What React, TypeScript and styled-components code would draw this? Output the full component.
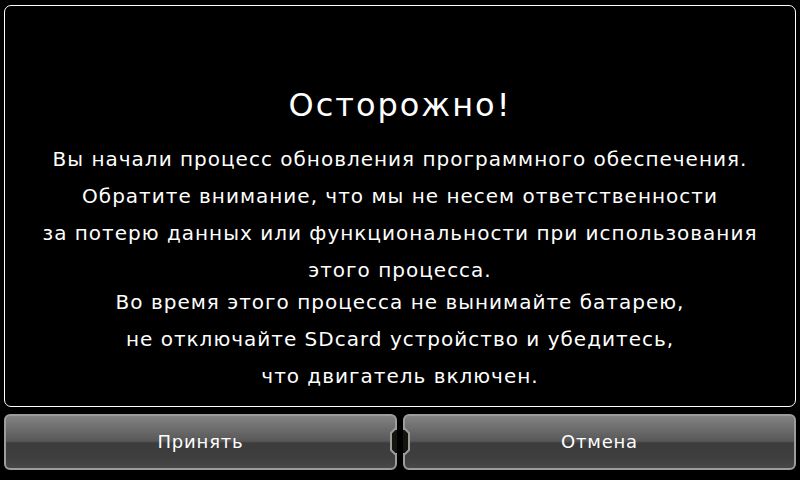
import React from 'react'
import styled, { createGlobalStyle } from 'styled-components'

const Global = createGlobalStyle`
  html, body {
    margin: 0;
    padding: 0;
    background: #000;
    width: 800px;
    height: 480px;
    overflow: hidden;
  }
  body {
    font-family: "DejaVu Sans", "Liberation Sans", sans-serif;
    color: #fff;
  }
`

const Screen = styled.div`
  width: 800px;
  height: 480px;
  box-sizing: border-box;
  padding: 5px 4px 0 4px;
  display: flex;
  flex-direction: column;
`

const Panel = styled.div`
  height: 402px;
  box-sizing: border-box;
  border: 1px solid #fff;
  border-radius: 7px;
  display: flex;
  flex-direction: column;
  align-items: center;
  padding-top: 79px;
`

const Title = styled.h1`
  margin: 0 0 16px 0;
  font-size: 32px;
  font-weight: normal;
  line-height: 40px;
  letter-spacing: 2px;
`

const Paragraph = styled.p<{ $shift?: number }>`
  margin: ${p => p.$shift ?? 0}px 0 0 0;
  font-size: 20px;
  line-height: 37px;
  letter-spacing: 1px;
  text-align: center;
  white-space: pre-line;
`

const ButtonRow = styled.div`
  display: flex;
  margin-top: 7px;
  height: 56px;
`

const Button = styled.button`
  flex: 1;
  height: 56px;
  box-sizing: border-box;
  border: 2px solid #9c9c9c;
  border-radius: 6px;
  background: linear-gradient(
    to bottom,
    #828282 0%,
    #6c6c6c 25%,
    #585858 48%,
    #3c3c3c 52%,
    #3e3e3e 80%,
    #484848 100%
  );
  color: #fff;
  font-family: "DejaVu Sans", "Liberation Sans", sans-serif;
  font-size: 18px;
  letter-spacing: 0.8px;
  padding: 0 0 2px 0;
  cursor: pointer;
`

const Divider = styled.div`
  width: 6px;
  position: relative;
`

const Notch = styled.svg`
  position: absolute;
  left: -7px;
  top: 14px;
  width: 20px;
  height: 27px;
`

export default function App() {
  return (
    <>
      <Global />
      <Screen>
        <Panel>
          <Title>Осторожно!</Title>
          <Paragraph>
            {'Вы начали процесс обновления программного обеспечения.\nОбратите внимание, что мы не несем ответственности\nза потерю данных или функциональности при использования\nэтого процесса.'}
          </Paragraph>
          <Paragraph $shift={-5}>
            {'Во время этого процесса не вынимайте батарею,\nне отключайте SDcard устройство и убедитесь,\nчто двигатель включен.'}
          </Paragraph>
        </Panel>
        <ButtonRow>
          <Button>Принять</Button>
          <Divider>
            <Notch viewBox="0 0 20 27">
              <polygon points="5,1 15,1 19,5 19,22 15,26 5,26 1,22 1,5" fill="#14140c" stroke="#9c9c9c" strokeWidth="2" />
              <rect x="7" y="-2" width="6" height="31" fill="#000" />
            </Notch>
          </Divider>
          <Button>Отмена</Button>
        </ButtonRow>
      </Screen>
    </>
  )
}
